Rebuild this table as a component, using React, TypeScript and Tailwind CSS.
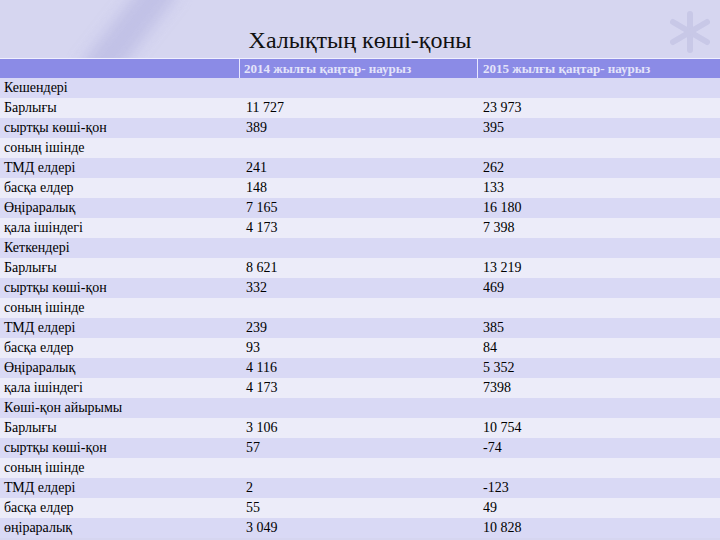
import React from 'react';

type Row = { label: string; a?: string; b?: string };

const rows: Row[] = [
  { label: 'Кешендері' },
  { label: 'Барлығы', a: '11 727', b: '23 973' },
  { label: 'сыртқы көші-қон', a: '389', b: '395' },
  { label: 'соның ішінде' },
  { label: 'ТМД елдері', a: '241', b: '262' },
  { label: 'басқа елдер', a: '148', b: '133' },
  { label: 'Өңіраралық', a: '7 165', b: '16 180' },
  { label: 'қала ішіндегі', a: '4 173', b: '7 398' },
  { label: 'Кеткендері' },
  { label: 'Барлығы', a: '8 621', b: '13 219' },
  { label: 'сыртқы көші-қон', a: '332', b: '469' },
  { label: 'соның ішінде' },
  { label: 'ТМД елдері', a: '239', b: '385' },
  { label: 'басқа елдер', a: '93', b: '84' },
  { label: 'Өңіраралық', a: '4 116', b: '5 352' },
  { label: 'қала ішіндегі', a: '4 173', b: '7398' },
  { label: 'Көші-қон айырымы' },
  { label: 'Барлығы', a: '3 106', b: '10 754' },
  { label: 'сыртқы көші-қон', a: '57', b: '-74' },
  { label: 'соның ішінде' },
  { label: 'ТМД елдері', a: '2', b: '-123' },
  { label: 'басқа елдер', a: '55', b: '49' },
  { label: 'өңіраралық', a: '3 049', b: '10 828' },
];

function Asterisk() {
  return (
    <svg width="44" height="44" viewBox="0 0 44 44" className="absolute right-[8px] top-[10px]">
      <g stroke="#c6c6e6" strokeWidth="6" strokeLinecap="round" opacity="0.85">
        <line x1="22" y1="4" x2="22" y2="40" />
        <line x1="5" y1="12" x2="39" y2="32" />
        <line x1="5" y1="32" x2="39" y2="12" />
      </g>
    </svg>
  );
}

export default function App() {
  return (
    <div
      className="relative w-[720px] h-[540px] overflow-hidden bg-[#d6d6f0]"
      style={{ fontFamily: '"Liberation Serif", "Times New Roman", serif' }}
    >
      {/* soft diagonal streak */}
      <div className="absolute left-[112px] top-[-30px] w-[34px] h-[120px] rotate-[38deg] bg-[#bcbce4] blur-[8px] opacity-80" />
      <Asterisk />

      <div className="relative h-[58px] flex items-end justify-center pb-[6px]">
        <h1 className="text-[24px] leading-none text-[#111]">Халықтың көші-қоны</h1>
      </div>

      <div className="relative border-t border-[#f0f0ff]">
        <div className="grid grid-cols-[240px_238px_1fr] h-[19px] bg-[#8b8be6] text-[13px] font-bold text-[#e4e4fa] leading-[19px]">
          <div className="border-r border-[#e8e8ff]" />
          <div className="border-r border-[#e8e8ff] pl-[4px]">2014 жылғы қаңтар- наурыз</div>
          <div className="pl-[5px]">2015 жылғы қаңтар- наурыз</div>
        </div>
        {rows.map((r, i) => (
          <div
            key={i}
            className={`grid grid-cols-[240px_238px_1fr] h-[20px] text-[14px] leading-[20px] text-black ${
              i % 2 === 0 ? 'bg-[#d9d9f5]' : 'bg-[#ececf9]'
            }`}
          >
            <div className="pl-[4px] whitespace-nowrap">{r.label}</div>
            <div className="pl-[6px]">{r.a}</div>
            <div className="pl-[5px]">{r.b}</div>
          </div>
        ))}
      </div>
    </div>
  );
}
